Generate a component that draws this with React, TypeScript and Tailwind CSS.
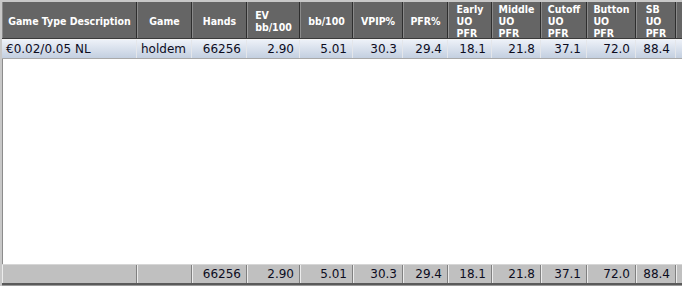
import React from "react";

type Col = { w: string; head: string[]; align: "l" | "r" };

const cols: Col[] = [
  { w: "w-[135px]", head: ["Game Type Description"], align: "l" },
  { w: "w-[55px]", head: ["Game"], align: "l" },
  { w: "w-[55px]", head: ["Hands"], align: "r" },
  { w: "w-[53px]", head: ["EV", "bb/100"], align: "r" },
  { w: "w-[53px]", head: ["bb/100"], align: "r" },
  { w: "w-[50px]", head: ["VPIP%"], align: "r" },
  { w: "w-[45px]", head: ["PFR%"], align: "r" },
  { w: "w-[44px]", head: ["Early", "UO", "PFR"], align: "r" },
  { w: "w-[49px]", head: ["Middle", "UO", "PFR"], align: "r" },
  { w: "w-[46px]", head: ["Cutoff", "UO", "PFR"], align: "r" },
  { w: "w-[49px]", head: ["Button", "UO", "PFR"], align: "r" },
  { w: "w-[40px]", head: ["SB", "UO", "PFR"], align: "r" },
  { w: "w-[60px]", head: [], align: "r" },
];

const row = ["€0.02/0.05 NL", "holdem", "66256", "2.90", "5.01", "30.3", "29.4", "18.1", "21.8", "37.1", "72.0", "88.4", ""];
const foot = ["", "", "66256", "2.90", "5.01", "30.3", "29.4", "18.1", "21.8", "37.1", "72.0", "88.4", ""];

export default function App() {
  return (
    <div
      className="w-[682px] h-[286px] overflow-hidden bg-white flex flex-col border-l-2 border-t-2 border-[#c8c8c8]"
      style={{ fontFamily: '"DejaVu Sans", Verdana, sans-serif' }}
    >
      {/* header */}
      <div className="flex h-[37px] shrink-0 border-b border-[#3a3a3a]">
        {cols.map((c, i) => (
          <div
            key={i}
            className={`${c.w} shrink-0 h-full bg-[#656565] border-r border-[#2e2e2e] border-l border-l-[#8a8a8a] flex items-center justify-center`}
          >
            <div
              className="text-left text-white font-bold text-[10.5px] leading-[12px] whitespace-nowrap pt-[1px]"
              style={{ fontFamily: '"DejaVu Sans Condensed", "DejaVu Sans", sans-serif' }}
            >
              {c.head.map((h, j) => (
                <div key={j}>{h}</div>
              ))}
            </div>
          </div>
        ))}
      </div>
      <div className="h-px shrink-0 bg-[#f2f2f2]" />
      {/* data row */}
      <div className="flex h-[19px] shrink-0 bg-gradient-to-b from-[#edf1f8] to-[#c3cfe0] border-b border-[#a9a9a9]">
        {cols.map((c, i) => (
          <div
            key={i}
            className={`${c.w} shrink-0 h-full border-r border-[#e4e6ea] flex items-center ${c.align === "l" ? "justify-start pl-[4px]" : "justify-end pr-[5px]"} text-[12px] text-[#0c0c1e] whitespace-nowrap`}
          >
            {row[i]}
          </div>
        ))}
      </div>
      {/* empty body */}
      <div className="flex-1 border-l border-[#8c8c8c] bg-white" />
      {/* footer */}
      <div className="flex h-[21px] shrink-0 border-t border-[#d6d6d6] border-b-2 border-b-[#5a5a5a]">
        {cols.map((c, i) => (
          <div
            key={i}
            className={`${c.w} shrink-0 h-full bg-[#c0c0c0] border-r border-[#808080] border-l border-l-[#ececec] flex items-center ${c.align === "l" ? "justify-start pl-[4px]" : "justify-end pr-[5px]"} text-[12px] text-[#0c0c1e] whitespace-nowrap`}
          >
            {foot[i]}
          </div>
        ))}
      </div>
      <div className="h-px shrink-0 bg-[#9a9a9a]" />
    </div>
  );
}
